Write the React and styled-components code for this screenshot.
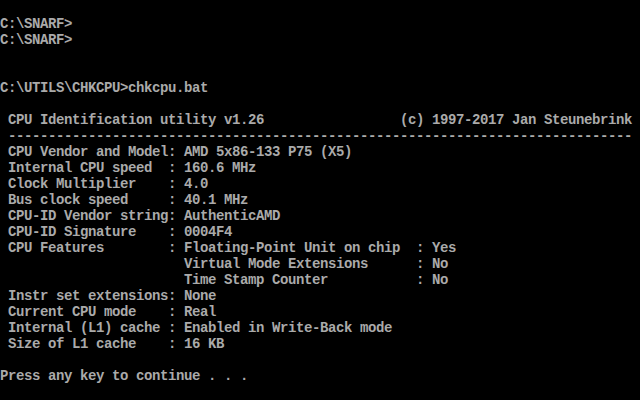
//* Imports
import styled, { createGlobalStyle } from "styled-components";

//* Global
const GlobalStyle = createGlobalStyle`
  html, body {
    margin: 0;
    padding: 0;
    background: #000;
  }
`;

//* Screen Style
const Screen = styled.div`
  width: 640px;
  height: 400px;
  background: #000;
  color: #aaaaaa;
  font-family: "Liberation Mono", "DejaVu Sans Mono", monospace;
  font-size: 14px;
  font-weight: bold;
  letter-spacing: -0.4px;
  overflow: hidden;
  display: flex;
  flex-direction: column;
`;

const Line = styled.div`
  height: 16px;
  line-height: 16px;
  white-space: pre;
`;

//* Data
const pad = (s, n) => s.padEnd(n, " ");

const info = [
  ["CPU Vendor and Model", "AMD 5x86-133 P75 (X5)"],
  ["Internal CPU speed", "160.6 MHz"],
  ["Clock Multiplier", "4.0"],
  ["Bus clock speed", "40.1 MHz"],
  ["CPU-ID Vendor string", "AuthenticAMD"],
  ["CPU-ID Signature", "0004F4"],
];

const features = [
  ["Floating-Point Unit on chip", "Yes"],
  ["Virtual Mode Extensions", "No"],
  ["Time Stamp Counter", "No"],
];

const more = [
  ["Instr set extensions", "None"],
  ["Current CPU mode", "Real"],
  ["Internal (L1) cache", "Enabled in Write-Back mode"],
  ["Size of L1 cache", "16 KB"],
];

const row = (label, value) => " " + pad(label, 20) + ": " + value;
const feat = ([name, value]) => pad(name, 29) + ": " + value;

const lines = [
  "",
  "C:\\SNARF>",
  "C:\\SNARF>",
  "",
  "",
  "C:\\UTILS\\CHKCPU>chkcpu.bat",
  "",
  pad(" CPU Identification utility v1.26", 50) + "(c) 1997-2017 Jan Steunebrink",
  " " + "-".repeat(78),
  ...info.map(([l, v]) => row(l, v)),
  ...features.map((f, i) => (i === 0 ? row("CPU Features", feat(f)) : " ".repeat(23) + feat(f))),
  ...more.map(([l, v]) => row(l, v)),
  "",
  "Press any key to continue . . .",
  "",
];

//* App JSX
function App() {
  return (
    <>
      <GlobalStyle />
      <Screen>
        {lines.map((text, i) => (
          <Line key={i}>{text}</Line>
        ))}
      </Screen>
    </>
  );
}

export default App;
